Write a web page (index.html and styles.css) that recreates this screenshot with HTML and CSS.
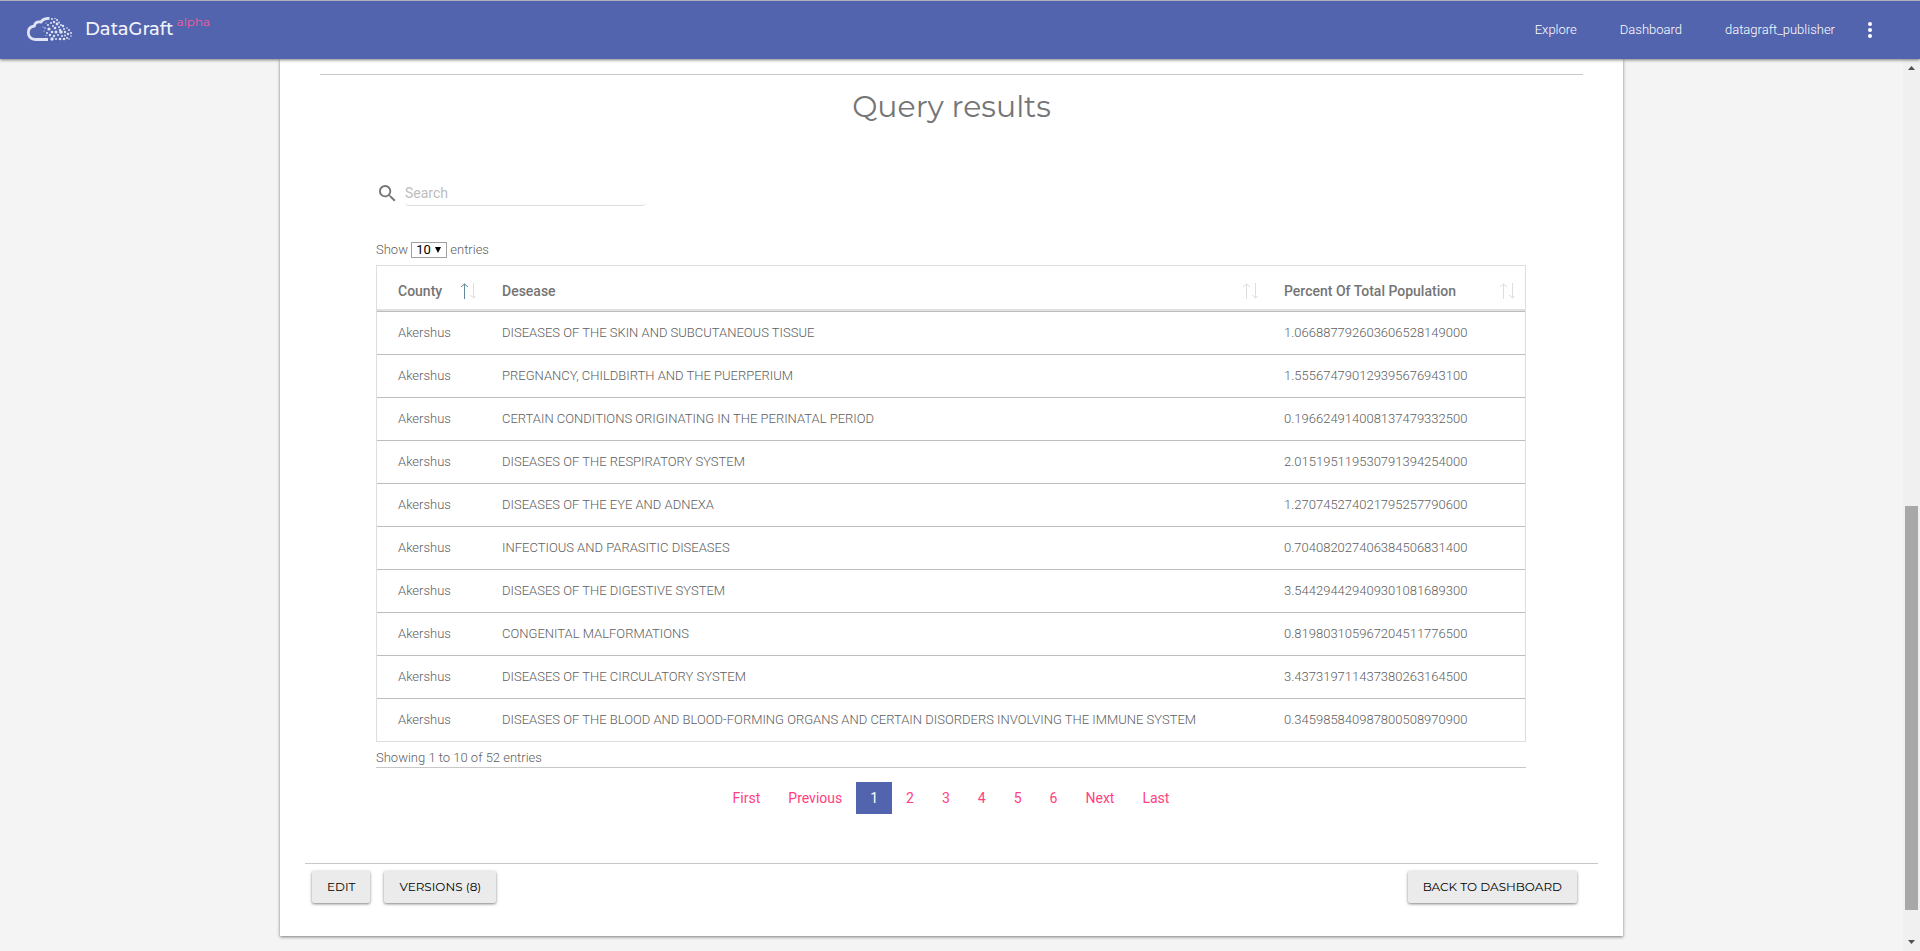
FILE: index.html
```html
<!DOCTYPE html>
<html lang="en">
<head>
<meta charset="utf-8">
<title>DataGraft</title>
<link rel="stylesheet" href="styles.css">
</head>
<body>
<header class="topbar">
  <a class="brand" href="#">
    <svg class="brand-logo" viewBox="0 0 48 26" width="48" height="26" aria-hidden="true">
      <path d="M22 22.500H9.500C5 22.500 2.300 19.500 2.300 15.500c0-3.500 2.500-6 6-6.500C9 5.500 12 4.500 15 5c1.500-2.500 4-3.700 8.500-3.700" fill="none" stroke="#dfe3f3" stroke-width="2.800"/>
      <g id="dots" fill="#dfe3f3"></g>
    </svg>
    <span class="brand-name">DataGraft</span>
    <span class="brand-tag">alpha</span>
  </a>
  <nav class="topnav">
    <a href="#">Explore</a>
    <a href="#">Dashboard</a>
    <a href="#">datagraft_publisher</a>
    <button class="more" type="button" aria-label="More">
      <svg viewBox="0 0 4 16" width="4" height="16"><g fill="#fff"><circle cx="2" cy="2" r="2"/><circle cx="2" cy="8" r="2"/><circle cx="2" cy="14" r="2"/></g></svg>
    </button>
  </nav>
</header>
<div class="viewport">
  <main class="page">
    <section class="card">
      <div class="results">
        <h1>Query results</h1>
        <div class="panel">
          <div class="search">
            <label for="q" aria-label="Search"><svg viewBox="3 3 18 18" width="17" height="17"><path fill="#757575" d="M15.500 14h-.79l-.28-.27A6.471 6.471 0 0 0 16 9.500 6.500 6.500 0 1 0 9.500 16c1.610 0 3.090-.59 4.230-1.570l.27.28v.79l5 4.990L20.490 19l-4.990-5zm-6 0C7.010 14 5 11.990 5 9.500S7.010 5 9.500 5 14 7.010 14 9.500 11.990 14 9.500 14z"/></svg></label>
            <input id="q" type="text" placeholder="Search">
          </div>
          <div class="length"><label for="len">Show</label> <span class="picker"><select id="len"><option>10</option><option>25</option><option>50</option></select></span> entries</div>
          <table class="grid">
            <colgroup><col class="c-county"><col><col class="c-pct"></colgroup>
            <thead><tr>
              <th><button type="button" class="sort asc">County<svg viewBox="0 0 16 16" width="16" height="16"><path class="up" d="M4.500 16V1M1 4l3.500-3L8 4"/><path class="down" d="M13.500 0v15M10 12l3.500 3 3.500-3"/></svg></button></th>
              <th><button type="button" class="sort">Desease<svg viewBox="0 0 16 16" width="16" height="16"><path class="up" d="M4.500 16V1M1 4l3.500-3L8 4"/><path class="down" d="M13.500 0v15M10 12l3.500 3 3.500-3"/></svg></button></th>
              <th><button type="button" class="sort">Percent Of Total Population<svg viewBox="0 0 16 16" width="16" height="16"><path class="up" d="M4.500 16V1M1 4l3.500-3L8 4"/><path class="down" d="M13.500 0v15M10 12l3.500 3 3.500-3"/></svg></button></th>
            </tr></thead>
            <tbody>
              <tr><td>Akershus</td><td>DISEASES OF THE SKIN AND SUBCUTANEOUS TISSUE</td><td>1.066887792603606528149000</td></tr>
              <tr><td>Akershus</td><td>PREGNANCY, CHILDBIRTH AND THE PUERPERIUM</td><td>1.555674790129395676943100</td></tr>
              <tr><td>Akershus</td><td>CERTAIN CONDITIONS ORIGINATING IN THE PERINATAL PERIOD</td><td>0.196624914008137479332500</td></tr>
              <tr><td>Akershus</td><td>DISEASES OF THE RESPIRATORY SYSTEM</td><td>2.015195119530791394254000</td></tr>
              <tr><td>Akershus</td><td>DISEASES OF THE EYE AND ADNEXA</td><td>1.270745274021795257790600</td></tr>
              <tr><td>Akershus</td><td>INFECTIOUS AND PARASITIC DISEASES</td><td>0.704082027406384506831400</td></tr>
              <tr><td>Akershus</td><td>DISEASES OF THE DIGESTIVE SYSTEM</td><td>3.544294429409301081689300</td></tr>
              <tr><td>Akershus</td><td>CONGENITAL MALFORMATIONS</td><td>0.819803105967204511776500</td></tr>
              <tr><td>Akershus</td><td>DISEASES OF THE CIRCULATORY SYSTEM</td><td>3.437319711437380263164500</td></tr>
              <tr><td>Akershus</td><td>DISEASES OF THE BLOOD AND BLOOD-FORMING ORGANS AND CERTAIN DISORDERS INVOLVING THE IMMUNE SYSTEM</td><td>0.345985840987800508970900</td></tr>
            </tbody>
          </table>
          <p class="info">Showing 1 to 10 of 52 entries</p>
          <nav class="pager" aria-label="Pages">
            <a href="#">First</a><a href="#">Previous</a><a href="#" class="current" aria-current="page">1</a><a href="#">2</a><a href="#">3</a><a href="#">4</a><a href="#">5</a><a href="#">6</a><a href="#">Next</a><a href="#">Last</a>
          </nav>
        </div>
      </div>
      <footer class="actions">
        <button type="button">EDIT</button>
        <button type="button">VERSIONS (8)</button>
        <button type="button" class="back">BACK TO DASHBOARD</button>
      </footer>
    </section>
  </main>
  <div class="scrollbar" aria-hidden="true">
    <svg viewBox="0 0 7 4" width="7" height="4"><path d="M0 4l3.500-4L7 4z" fill="#505050"/></svg>
    <div class="track"><div class="thumb"></div></div>
    <svg viewBox="0 0 7 4" width="7" height="4"><path d="M0 0l3.500 4L7 0z" fill="#505050"/></svg>
  </div>
</div>
<script src="logo.js"></script>
</body>
</html>
```
FILE: logo.js
```js
// Dots of the cloud's right half: [x, y, radius]
const dots = [
  [26,2,1],[29,1.5,.7],[31,3,1.1],[28,5,1.2],[25,6,1],[33,5.500,.9],[22,8,1.1],[31,7,1.4],[35,8,1],[27,9,1],[19,11,.8],[23,12,1.600],
  [29,11,1.300],[33,10,1],[37,9,1.200],[26,15,1.300],[30,15,1.500],[34,13,1.200],[38,12,1],[41,11,.8],[21,16,1],[18,14,.6],[35,15,1.800],
  [39,15,1.200],[43,13,1],[45,16,1],[42,17,1.200],[24,18,1.200],[28,19,1.200],[32,18,1],[36,19,1],[39,18.500,.9],[45,19,.8],[26,22,1.700],
  [30,22,1],[34,22,1.300],[38,22,1.300],[41,21,1],[43,22,.8],[20,6,.6],[17,10,.5],[20,18.500,.6]
];
const ns = "http://www.w3.org/2000/svg";
const group = document.getElementById("dots");
for (const [x, y, r] of dots) {
  const c = document.createElementNS(ns, "circle");
  c.setAttribute("cx", x);
  c.setAttribute("cy", y);
  c.setAttribute("r", r);
  group.append(c);
}
```
FILE: styles.css
```css
* { box-sizing: border-box; }
body {
  margin: 0;
  min-height: 100vh;
  display: flex;
  flex-direction: column;
  background: #f4f4f4;
  color: #757575;
  font: 13px/20px Roboto, sans-serif;
}
a { text-decoration: none; }
button { font: inherit; color: inherit; border: 0; background: none; padding: 0; cursor: pointer; }

.topbar {
  position: relative;
  z-index: 1;
  height: 59px;
  padding: 0 48px 0 26px;
  display: flex;
  align-items: center;
  justify-content: space-between;
  background: #5264ae;
  border-top: 1px solid #b0b0b8;
  box-shadow: 0 1px 3px rgba(0, 0, 0, .5);
}
.brand { display: flex; align-items: center; color: #f2f3fa; font-family: Montserrat, Inter, sans-serif; }
.brand-name { margin: 0 3px 2px 11px; font-size: 18px; font-weight: 500; line-height: 24px; }
.brand-tag { align-self: flex-start; font-size: 12px; line-height: 10px; color: #f0609c; }
.topnav { display: flex; align-items: center; gap: 43px; }
.topnav a { color: #fff; font-weight: 300; }
.more { margin-left: -10px; display: flex; }

.viewport { flex: 1; display: flex; }
.page { flex: 1; padding: 0 280px 15px; }
.card { background: #fff; height: 100%; padding: 15px 25px 32px; box-shadow: 0 1px 3px rgba(0, 0, 0, .5); }
.results { margin: 0 15px; border-top: 1px solid #c8c8c8; }
h1 { margin: 0; padding-top: 8px; font: 400 30px/48px Montserrat, Inter, sans-serif; text-align: center; }
.panel { margin: 49px 57px 0 56px; }

.search { display: flex; align-items: center; gap: 9px; padding-left: 3px; }
.search label { display: flex; }
.search input {
  width: 241px;
  height: 26px;
  padding: 0;
  border: 0;
  border-bottom: 1px solid #ddd;
  border-radius: 4px;
  font: 14px/24px Roboto, sans-serif;
  background: none;
}
.search input::placeholder { color: #bdbdbd; }
.length { margin-top: 34px; padding-bottom: 5px; font-weight: 300; color: #606060; }
.picker { position: relative; display: inline-block; }
.picker::after {
  content: "";
  position: absolute;
  right: 6px;
  top: 7px;
  border: solid transparent;
  border-width: 6px 3px 0;
  border-top-color: #000;
}
.picker select {
  appearance: none;
  width: 36px;
  height: 16px;
  padding: 0 0 0 4px;
  border: 1px solid #a0a0a0;
  background: #fff;
  color: #000;
  font: 13px/14px Roboto, sans-serif;
}

.grid { width: 100%; table-layout: fixed; border: 1px solid #dedede; border-spacing: 0; }
.c-county { width: 104px; }
.c-pct { width: 262px; }
.grid th { padding: 6px 5px 0 21px; height: 45px; border-bottom: 2px solid #e0e0e0; }
.grid th:last-child { padding-right: 10px; }
.grid td { padding: 0 0 0 21px; height: 43px; border-top: 1px solid #bdbdbd; white-space: nowrap; font-weight: 300; color: #606060; }
.sort { width: 100%; display: flex; align-items: center; justify-content: space-between; font-size: 14px; font-weight: 500; }
.sort path { fill: none; stroke: #dedede; }
.sort.asc .up { stroke: #62889e; }

.info { margin: 0; padding-top: 6px; line-height: 19px; border-bottom: 1px solid #c8c8c8; font-weight: 300; color: #606060; }
.pager { margin-top: 14px; display: flex; justify-content: center; font-size: 14px; }
.pager a { padding: 6px 14px; color: #ff4081; }
.pager .current { background: #5264ae; color: #fff; }

.actions { margin-top: 49px; padding: 7px 21px 0 7px; display: flex; gap: 14px; border-top: 1px solid #c8c8c8; }
.actions button {
  height: 32px;
  padding: 0 15px;
  border-radius: 2px;
  background: #ebebeb;
  color: #000;
  font: 400 12px/32px Montserrat, Inter, sans-serif;
  box-shadow: 0 1px 3px rgba(0, 0, 0, .5);
}
.actions .back { margin-left: auto; }

.scrollbar { width: 17px; padding: 7px 0; display: flex; flex-direction: column; align-items: center; background: #f0f0f0; }
.track { flex: 1; width: 13px; display: flex; flex-direction: column; justify-content: flex-end; padding: 6px 0 30px; }
.thumb { height: 48.500%; background: #a8a8a8; }
```
